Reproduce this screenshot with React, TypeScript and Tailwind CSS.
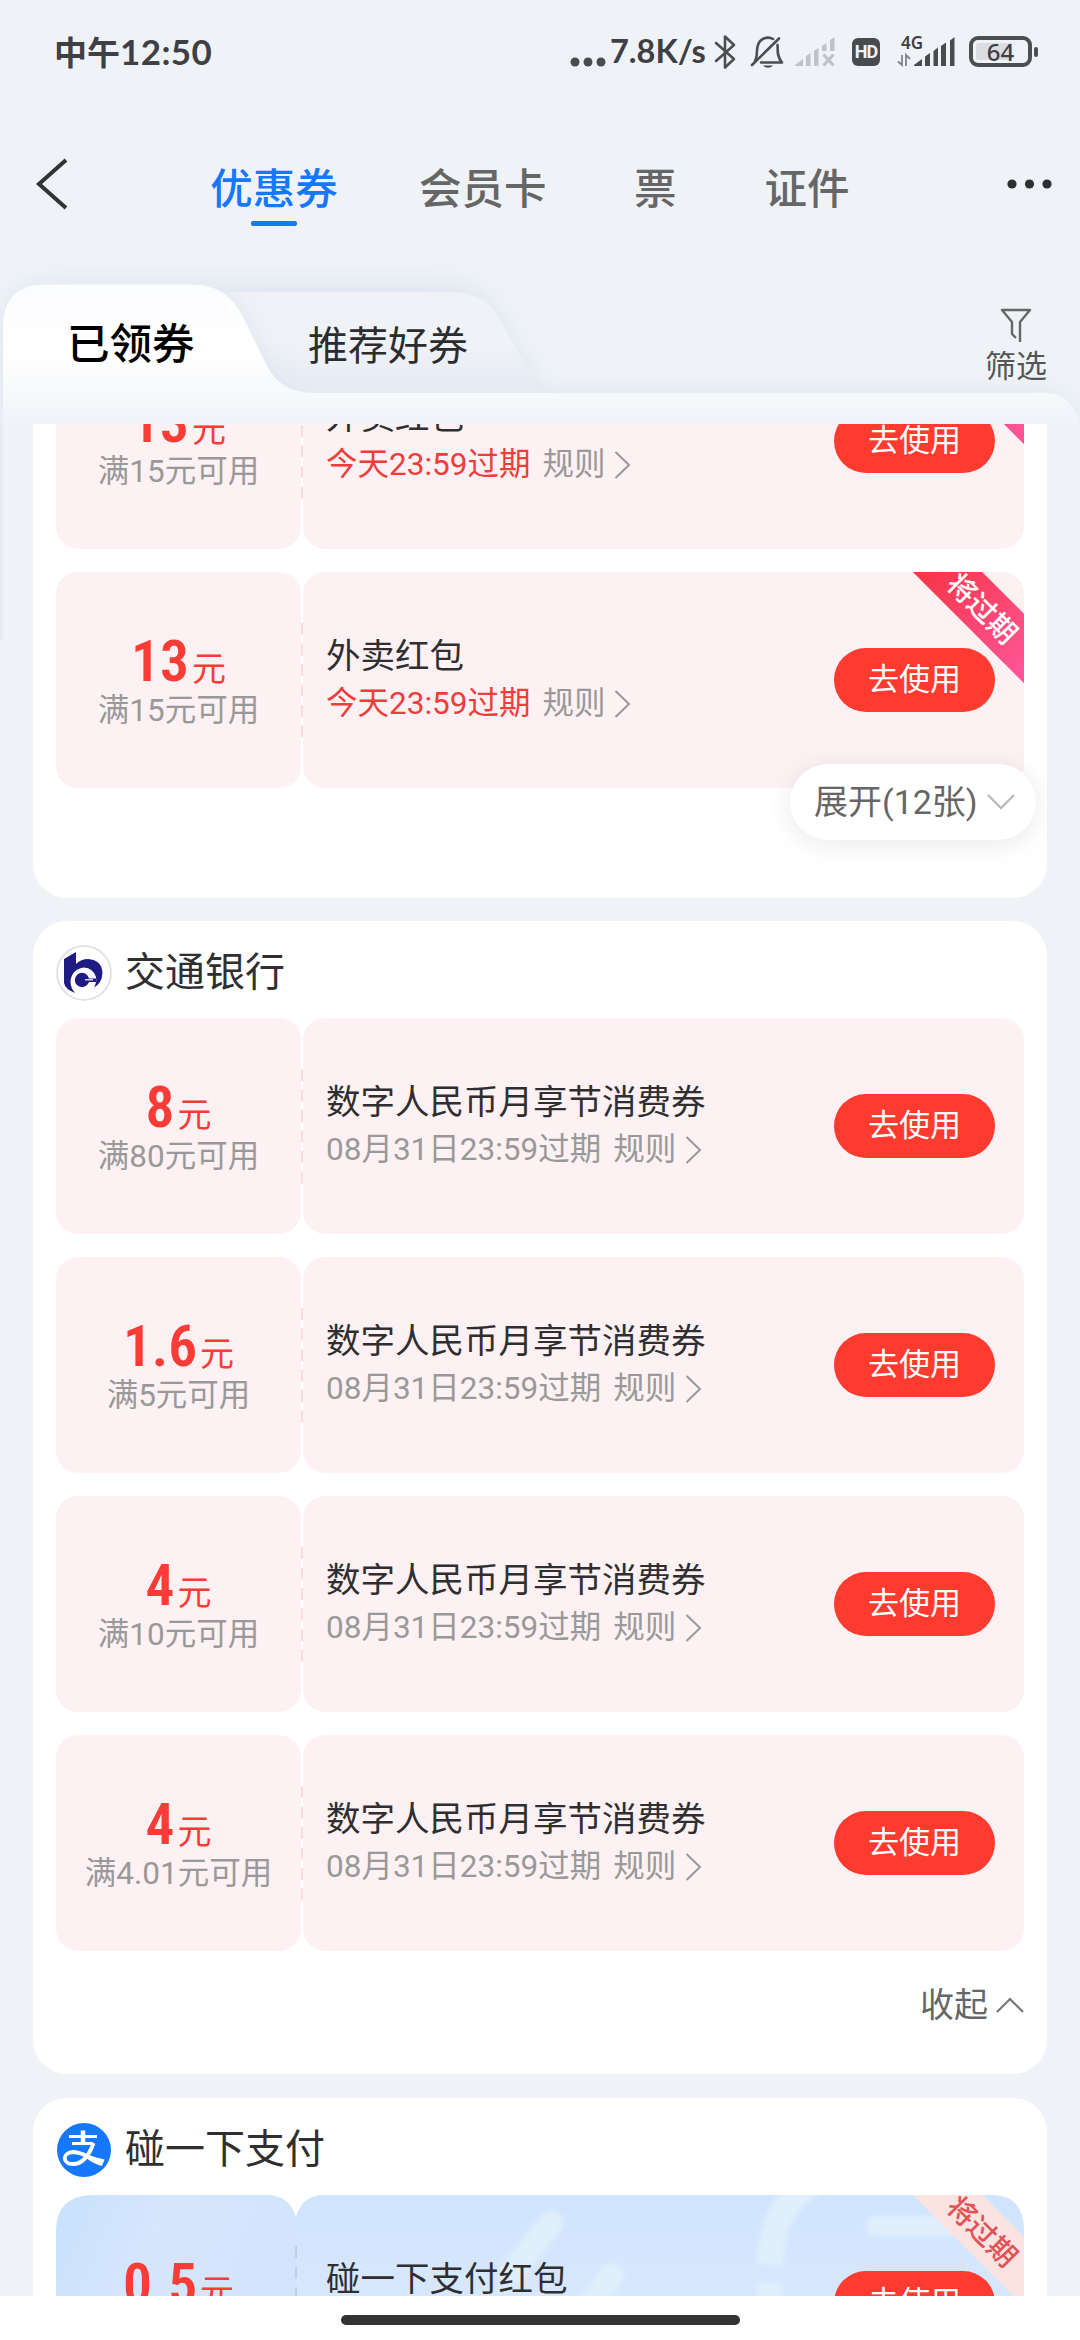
import React from 'react'

const FONT = "font-['Roboto','Noto_Sans_CJK_SC',sans-serif]"

type CouponData = {
  amount: string
  limit: string
  title: string
  expire: string
  urgent?: boolean
  ribbon?: 'red' | 'pale'
  blue?: boolean
}

function StatusBar() {
  return (
    <div className="flex h-[103px] items-center justify-between pl-[54px] pr-[42px] text-[#3f4044]">
      <div className="font-['Noto_Sans_CJK_SC',sans-serif] text-[33px] leading-none font-bold">
        中午<span className="font-['Lato','Noto_Sans_CJK_SC',sans-serif] text-[35px] font-bold tracking-[0.4px]">12:50</span>
      </div>
      <div className="flex h-[36px] items-center">
        <svg width="40" height="36" viewBox="0 0 40 36">
          <circle cx="5" cy="28" r="4.5" fill="#4a4b4f" />
          <circle cx="18" cy="28" r="4.5" fill="#4a4b4f" />
          <circle cx="31" cy="28" r="4.5" fill="#4a4b4f" />
        </svg>
        <span className="w-[102px] font-['Lato',sans-serif] text-[32.500px] leading-none font-bold whitespace-nowrap">7.8K/s</span>
        <svg width="26" height="36" viewBox="0 0 26 36" fill="none" stroke="#4d4e52" strokeWidth="2.6" strokeLinejoin="round" strokeLinecap="round">
          <path d="M4 9 L22 25 L13 33.5 V2.5 L22 11 L4 27" />
        </svg>
        <svg width="38" height="36" viewBox="0 0 38 36" fill="none" stroke="#4d4e52" strokeWidth="2.6" strokeLinejoin="round" strokeLinecap="round" className="ml-[10px]">
          <path d="M4 31 L31 4.500" />
          <path d="M7 27 C10 22 8 16 10 11 C12 4 20 2 25 5" />
          <path d="M29.500 11 C30 17 28.500 22 34 28.500 H13" />
          <path d="M15 31.500 H25 C22 34.500 18 34.500 15 31.500Z" fill="#4d4e52" stroke="none" />
        </svg>
        <svg width="42" height="36" viewBox="0 0 42 36" fill="#bfc2c7" className="ml-[8px]">
          <path d="M1 32 V31 L9 25 V32Z" />
          <path d="M12 32 V22 L16.500 19 V32Z" />
          <path d="M20 32 V17 L24.500 14 V32Z" />
          <path d="M28 17 V12 L32.500 9 V17Z" />
          <path d="M36 17 V6 L40.500 3 V17Z" />
          <path d="M29.500 20.500 L39.500 31.500 M39.500 20.500 L29.500 31.500" stroke="#bfc2c7" strokeWidth="3.2" />
        </svg>
        <span className="ml-[16px] flex h-[28px] w-[28px] items-center justify-center rounded-[6px] bg-[#4a4b4f] font-['Roboto',sans-serif] text-[18px] leading-none font-bold tracking-[-1px] text-[#eff3f8]">
          HD
        </span>
        <div className="relative ml-[17px] h-[36px] w-[58px]">
          <span className="absolute top-[-1px] left-[4px] font-['Noto_Sans',sans-serif] text-[17px] leading-[20px] font-semibold">4G</span>
          <svg width="58" height="36" viewBox="0 0 58 36" fill="#4a4b4f">
            <path d="M5 21 V31 L1 27.500 M9 32 V21 L13 25" fill="none" stroke="#808287" strokeWidth="1.8" />
            <path d="M17 32 V31 L25 25 V32Z" />
            <path d="M28 32 V22.500 L33 19 V32Z" />
            <path d="M36.500 32 V17 L41 13.500 V32Z" />
            <path d="M44 32 V12 L49 8.500 V32Z" />
            <path d="M53 32 V6.500 L57.500 3 V32Z" />
          </svg>
        </div>
        <div className="ml-[14px] flex h-[31px] w-[63px] items-center justify-center rounded-[9px] border-[4px] border-[#4d4e52] bg-[linear-gradient(90deg,#dadde2_70%,transparent_70%)] bg-clip-content p-[3px]">
          <span className="font-['Noto_Sans',sans-serif] text-[24px] leading-none font-medium">64</span>
        </div>
        <span className="ml-[2px] h-[10px] w-[4px] rounded-[2px] bg-[#4d4e52]" />
      </div>
    </div>
  )
}

function NavBar() {
  return (
    <nav className="flex h-[155px] pt-[47px] font-['Noto_Sans_CJK_SC',sans-serif] text-[42.500px] leading-[72px] font-medium text-[#666]">
      <svg width="34" height="54" viewBox="0 0 34 54" className="mt-[7px] ml-[34px]" fill="none" stroke="#333" strokeWidth="4">
        <path d="M32 3 L5 27 L32 51" />
      </svg>
      <div className="ml-[142px] flex w-[128px] flex-col items-center text-[#1677ff]">
        <span className="whitespace-nowrap">优惠券</span>
        <span className="-mt-[1px] h-[5px] w-[46px] rounded-[2px] bg-[#1f77ee]" />
      </div>
      <span className="ml-[81px] w-[128px] whitespace-nowrap">会员卡</span>
      <span className="ml-[87px]">票</span>
      <span className="ml-[88px]">证件</span>
      <svg width="48" height="14" viewBox="0 0 48 14" className="mt-[27px] ml-[156px]" fill="#2f2f33">
        <circle cx="6" cy="7" r="4.600" />
        <circle cx="23.500" cy="7" r="4.600" />
        <circle cx="41" cy="7" r="4.600" />
      </svg>
    </nav>
  )
}

function SegmentTabs() {
  return (
    <div className="relative flex h-[166px] pt-[26px]">
      <svg width="1080" height="180" viewBox="0 0 1080 180" className="absolute inset-x-0 top-[-14px]">
        <defs>
          <linearGradient id="front" x1="0" y1="0" x2="0" y2="1">
            <stop offset="0" stopColor="#fbfcfe" />
            <stop offset="0.5" stopColor="#ffffff" />
            <stop offset="1" stopColor="#f0f3f8" />
          </linearGradient>
          <linearGradient id="back" x1="0" y1="0" x2="0" y2="1">
            <stop offset="0" stopColor="#f0f2f7" />
            <stop offset="0.500" stopColor="#eff2f7" />
            <stop offset="1" stopColor="#e6eaf4" />
          </linearGradient>
          <filter id="soft" x="-10%" y="-30%" width="120%" height="160%">
            <feGaussianBlur stdDeviation="13" />
          </filter>
          <clipPath id="backClip">
            <path d="M200 48 H450 Q484 48 498 72 L541 149 H200Z" />
          </clipPath>
        </defs>
        <path d="M3 185 V84 Q3 40 50 40 H450 Q484 44 498 72 L541 149 H1045 Q1072 149 1078 185Z" fill="#dce1ee" filter="url(#soft)" opacity="0.85" />
        <path d="M200 48 H450 Q484 48 498 72 L541 149 H200Z" fill="url(#back)" />
        <g clipPath="url(#backClip)">
          <path d="M190 40 Q226 42 242 78 L268 128 Q284 146 312 149 H190Z" fill="#d8deec" filter="url(#soft)" opacity="0.8" />
        </g>
        <path d="M3 180 V84 Q3 40.500 45 40.500 H193 Q227 40.500 243 73 L267 122 Q280 148 312 149 H1048 Q1068 149 1079 176 V180Z" fill="url(#front)" />
      </svg>
      <span className="relative mt-[23px] ml-[67px] w-[128px] font-['Noto_Sans_CJK_SC',sans-serif] text-[42.500px] leading-[68px] font-medium whitespace-nowrap text-black">已领券</span>
      <span className="relative mt-[25px] ml-[113px] w-[162px] font-['Noto_Sans_CJK_SC',sans-serif] text-[40px] leading-[68px] whitespace-nowrap text-[#2c2c2e]">推荐好券</span>
      <div className="relative mt-[23px] ml-auto flex w-[128px] flex-col items-center text-[#555]">
        <svg width="32" height="36" viewBox="0 0 32 36" fill="none" stroke="#666" strokeWidth="2.400" strokeLinejoin="round">
          <path d="M20 35 V15 L30 3 H2 L12 15 V27 L16 31" />
        </svg>
        <span className="font-['Noto_Sans_CJK_SC',sans-serif] text-[31px] leading-[42px]">筛选</span>
      </div>
    </div>
  )
}

function Ribbon({ pale }: { pale?: boolean }) {
  return (
    <div className="absolute top-0 right-0 h-[112px] w-[112px] overflow-hidden">
      <div
        className={
          pale
            ? 'absolute top-[11px] left-[-19px] flex h-[49px] w-[180px] rotate-45 items-center justify-center bg-[#fbe3e2] text-[#e05458]'
            : 'absolute top-[11px] left-[-19px] flex h-[49px] w-[180px] rotate-45 items-center justify-center bg-[linear-gradient(90deg,#f8364a_15%,#ff5596_90%)] text-white'
        }
      >
        <span className="font-['Noto_Sans_CJK_SC',sans-serif] text-[28.500px] leading-none font-medium">将过期</span>
      </div>
    </div>
  )
}

function Perforation({ blue }: { blue?: boolean }) {
  return (
    <svg width="2" height="116" viewBox="0 0 2 116" className={blue ? 'absolute top-[50px] left-[239px]' : 'absolute top-[50px] left-[245px]'}>
      <path d="M1 1 V116" stroke={blue ? '#c3cee0' : '#f9dcdf'} strokeWidth="2" strokeDasharray="12 8.500" />
    </svg>
  )
}

function BlueArt() {
  return (
    <svg width="968" height="216" viewBox="0 0 968 216" className="absolute inset-0">
      <defs>
        <linearGradient id="sky" x1="0" y1="0" x2="0" y2="1">
          <stop offset="0" stopColor="#cfe4fe" />
          <stop offset="0.500" stopColor="#d8e8fd" />
          <stop offset="1" stopColor="#d4e4fb" />
        </linearGradient>
        <linearGradient id="skyLeft" x1="0" y1="0" x2="1" y2="0.400">
          <stop offset="0" stopColor="#c8e1fc" />
          <stop offset="0.400" stopColor="#d5e6fd" />
          <stop offset="1" stopColor="#d2e4fc" />
        </linearGradient>
        <filter id="haze">
          <feGaussianBlur stdDeviation="2.500" />
        </filter>
        <clipPath id="rightPart">
          <path d="M240 216 V22 Q246 0 268 0 H936 Q968 0 968 36 V216Z" />
        </clipPath>
      </defs>
      <path d="M0 216 V36 Q0 0 38 0 H214 Q234 2 240 22 V216Z" fill="url(#skyLeft)" />
      <path d="M240 216 V22 Q246 0 268 0 H936 Q968 0 968 36 V216Z" fill="url(#sky)" />
      <g clipPath="url(#rightPart)" stroke="#e1effc" fill="none" strokeLinecap="round" filter="url(#haze)">
        <path d="M495 28 L455 78" strokeWidth="24" />
        <path d="M556 80 L528 120" strokeWidth="24" />
        <path d="M765 -16 C722 4 716 36 714 70" strokeWidth="26" strokeLinecap="butt" />
        <path d="M714 88 V130" strokeWidth="24" strokeLinecap="butt" />
        <path d="M820 31 H930" strokeWidth="20" />
      </g>
    </svg>
  )
}

function Coupon({ c }: { c: CouponData }) {
  const half = c.blue ? '' : 'bg-[#fef1f3]'
  return (
    <div className="relative flex h-[216px] w-[968px] shrink-0 gap-[2px]">
      {c.blue && <BlueArt />}
      <div className={`relative flex w-[245px] shrink-0 flex-col items-center rounded-[22px] pt-[61px] ${half}`}>
        <div className="flex h-[58px] items-baseline leading-[58px] text-[#fa3b36]">
          <span className="text-[57.500px] font-semibold [font-stretch:78%]">{c.amount}</span>
          <span className="ml-[3px] font-['Noto_Sans_CJK_SC',sans-serif] text-[34px]">元</span>
        </div>
        <div className="text-[31.500px] leading-[40px] whitespace-nowrap text-[#999]">{c.limit}</div>
      </div>
      <div className={`relative flex flex-1 items-center overflow-hidden rounded-[22px] ${half}`}>
        <div className="flex flex-1 flex-col pl-[23px]">
          <span className="-mt-[1px] text-[34.500px] leading-[48px] whitespace-nowrap text-[#2f2f31]">{c.title}</span>
          <div className="flex items-center text-[31.500px] leading-[48px] whitespace-nowrap text-[#999]">
            <span className={c.urgent ? 'text-[#ee3d3b]' : ''}>{c.expire}</span>
            <span className="ml-[12px]">规则</span>
            <svg width="17" height="30" viewBox="0 0 17 30" className="ml-[9px]" fill="none" stroke="#999" strokeWidth="2">
              <path d="M1.500 2 L15 15 L1.500 28" />
            </svg>
          </div>
        </div>
        {c.ribbon && <Ribbon pale={c.ribbon === 'pale'} />}
        <div className="relative mr-[29px] flex h-[64px] w-[161px] items-center justify-center rounded-full bg-[#ff3b2f] pb-[1px] text-[31px] leading-none text-white">
          去使用
        </div>
      </div>
      <Perforation blue={c.blue} />
    </div>
  )
}

const takeaway: CouponData = {
  amount: '13',
  limit: '满15元可用',
  title: '外卖红包',
  expire: '今天23:59过期',
  urgent: true,
  ribbon: 'red',
}

const bank = (amount: string, limit: string): CouponData => ({
  amount,
  limit,
  title: '数字人民币月享节消费券',
  expire: '08月31日23:59过期',
})

const bankCoupons = [
  bank('8', '满80元可用'),
  bank('1.6', '满5元可用'),
  bank('4', '满10元可用'),
  bank('4', '满4.01元可用'),
]

function BankLogo() {
  return (
    <svg width="56" height="56" viewBox="0 0 56 56">
      <circle cx="28" cy="28" r="27" fill="#fff" stroke="#dcdce4" strokeWidth="1.500" />
      <path d="M8 14 L20 7 V19 Q25 14 32 14 Q46 15 46.500 28 Q46 38 38 42.500 Q41 37 40 32 Q37 23 28 22.500 Q16 24 14.500 36 Q14.500 43 19 48 Q9 44 8 38Z" fill="#1e1c82" />
      <circle cx="26" cy="35" r="7.200" fill="#1e1c82" />
      <path d="M26 33.500 H40 V37 H26Z" fill="#1e1c82" />
      <path d="M29 34.800 H37" stroke="#fff" strokeWidth="1.200" />
    </svg>
  )
}

function PayLogo() {
  return (
    <svg width="56" height="56" viewBox="0 0 56 56">
      <circle cx="28" cy="28" r="27" fill="#1677ff" />
      <g fill="none" stroke="#fff">
        <path d="M27 8.500 V21" strokeWidth="4.500" />
        <path d="M13 14.500 H41" strokeWidth="3" />
        <path d="M16 21.500 H37" strokeWidth="3" />
        <path d="M37.500 21 C34 31 28 42 17 42 C6 42 6 30.500 17 30 C27 30 36 38 47 39.500" strokeWidth="3.800" />
        <path d="M30 33 L48.500 37.500 L46 44 Q38 42 30 36Z" fill="#fff" stroke="none" />
      </g>
    </svg>
  )
}

function CardHeader({ icon, title }: { icon: React.ReactNode; title: string }) {
  return (
    <div className="flex h-[97px] items-center pt-[6px]">
      {icon}
      <span className="ml-[13px] text-[40px] leading-[60px] text-[#2f2f31]">{title}</span>
    </div>
  )
}

export default function App() {
  return (
    <div className={`flex h-[2340px] w-[1080px] flex-col overflow-hidden bg-[#eff3f8] ${FONT}`}>
      <StatusBar />
      <NavBar />
      <SegmentTabs />
      <main className="relative flex h-[1872px] shrink-0 flex-col overflow-hidden px-[33px]">
        <span className="absolute top-0 left-0 h-[216px] w-[3px] bg-[#e7ebf3]" />
        <section className="relative flex h-[474px] shrink-0 flex-col gap-[23px] overflow-hidden rounded-b-[34px] bg-white pl-[23px]">
          <div className="-mt-[91px]">
            <Coupon c={takeaway} />
          </div>
          <Coupon c={takeaway} />
          <div className="absolute top-[340px] right-[11px] flex h-[76px] w-[246px] items-center rounded-full bg-white pl-[24px] text-[34px] text-[#666] shadow-[0_4px_26px_rgba(0,0,0,0.09)]">
            <span className="whitespace-nowrap">展开(12张)</span>
            <svg width="30" height="18" viewBox="0 0 30 18" className="ml-[8px]" fill="none" stroke="#bbb" strokeWidth="2.400">
              <path d="M2 2 L15 15 L28 2" />
            </svg>
          </div>
        </section>
        <section className="mt-[23px] flex h-[1153px] shrink-0 flex-col rounded-[34px] bg-white pl-[23px]">
          <CardHeader icon={<BankLogo />} title="交通银行" />
          <div className="flex flex-col gap-[23px]">
            {bankCoupons.map((c, i) => (
              <Coupon key={i} c={c} />
            ))}
          </div>
          <div className="mt-[30px] flex items-center justify-end pr-[22px] text-[34px] leading-[48px] text-[#666]">
            收起
            <svg width="30" height="18" viewBox="0 0 30 18" className="ml-[7px]" fill="none" stroke="#777" strokeWidth="2.200">
              <path d="M2 16 L15 3 L28 16" />
            </svg>
          </div>
        </section>
        <section className="mt-[24px] flex shrink-0 flex-col rounded-t-[34px] bg-white pl-[23px]">
          <CardHeader icon={<PayLogo />} title="碰一下支付" />
          <Coupon
            c={{ amount: '0.5', limit: '满0.51元可用', title: '碰一下支付红包', expire: '今天23:59过期', urgent: true, ribbon: 'pale', blue: true }}
          />
        </section>
      </main>
      <footer className="flex h-[44px] shrink-0 justify-center bg-white pt-[19px]">
        <span className="h-[10px] w-[399px] rounded-full bg-[#333]" />
      </footer>
    </div>
  )
}
